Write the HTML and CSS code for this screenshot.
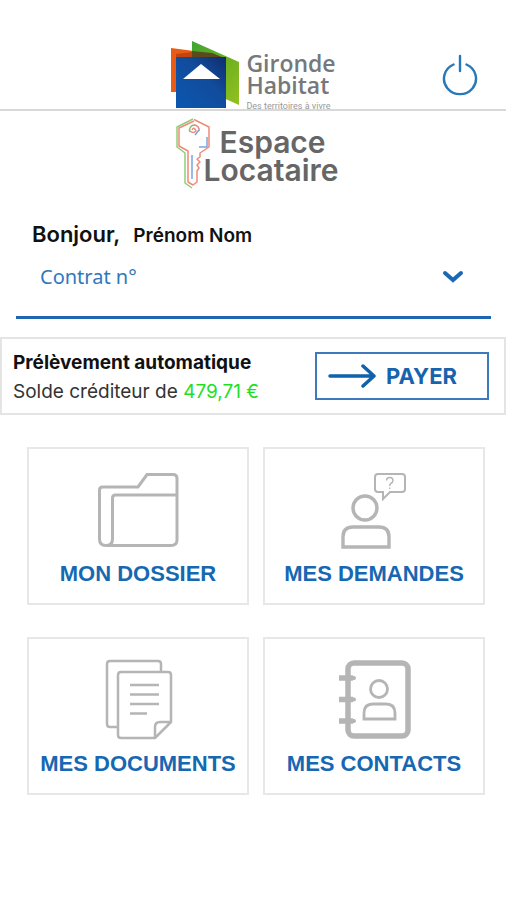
FILE: index.html
```html
<!DOCTYPE html>
<html lang="fr">
<head>
<meta charset="utf-8">
<meta name="viewport" content="width=device-width, initial-scale=1">
<title>Gironde Habitat – Espace Locataire</title>
<link rel="stylesheet" href="styles.css">
</head>
<body>
<header class="header">
  <a class="brand" href="#">
    <svg class="brand-mark" viewBox="0 0 70 68" aria-hidden="true">
      <defs>
        <linearGradient id="blue" x1="0" y1="1" x2="1" y2="0">
          <stop offset="0" stop-color="#0a58b0"/><stop offset=".6" stop-color="#124b9c"/><stop offset="1" stop-color="#102c6c"/>
        </linearGradient>
        <linearGradient id="green" x1="0" y1="0" x2="1" y2="1">
          <stop offset="0" stop-color="#3fa535"/><stop offset=".55" stop-color="#6fb11f"/><stop offset="1" stop-color="#95c11f"/>
        </linearGradient>
      </defs>
      <path fill="#ea5b13" d="M1 8 24 11V52H1z"/>
      <path fill="url(#green)" d="M22 1 69 22V65L22 44z"/>
      <path fill="#5a4a1c" d="M22 11 42 13 52 17H22z"/>
      <path fill="#c2450f" d="M6 14 22 12V17H6z"/>
      <path fill="url(#blue)" d="M6 17H56V68H6z"/>
      <path fill="#fff" d="M13 39 31 24 50 39z"/>
    </svg>
    <span class="brand-text">
      <span class="brand-name">Gironde</span>
      <span class="brand-name">Habitat</span>
      <span class="brand-tag">Des territoires à vivre</span>
    </span>
  </a>
  <button class="power" type="button" aria-label="Se déconnecter">
    <svg viewBox="0 0 36 42" aria-hidden="true">
      <path d="M11.500 10.500A16 15.500 0 1 0 24.500 10.500M18 2V17" fill="none" stroke="#2878b8" stroke-width="2.400" stroke-linecap="round"/>
    </svg>
  </button>
</header>

<main>
  <h1 class="space">
    <svg class="space-key" viewBox="0 0 36 72" aria-hidden="true">
      <g fill="none" stroke-width="1.500" stroke-linejoin="round">
        <path stroke="#8ccf7c" d="M18 2 2 10V30L10 36V66L17 71"/>
        <path stroke="#f08a78" d="M19 2.500 34 10V30L25 36V40L22 42 25 45 22 48 24 51 22 54V65L18 68 13 65V34L4 29V11L19 4"/>
        <path stroke="#7aa6dc" d="M32 20V30H24M17 38V62"/>
        <path stroke="#7ac27a" d="M15 15A5 5 0 0 1 20 8"/>
        <path stroke="#f08a78" d="M19 8A5 5 0 0 1 24 14M15 14Q18 17 21 14Q19 9 17 13"/>
        <path stroke="#7aa6dc" d="M24 13 20 18"/>
      </g>
    </svg>
    <span class="space-text"><span class="space-first">Espace</span><span>Locataire</span></span>
  </h1>

  <p class="hello"><strong class="hello-word">Bonjour,</strong><strong>Prénom Nom</strong></p>

  <div class="contract">
    <select class="contract-select" aria-label="Contrat">
      <option>Contrat n°</option>
    </select>
    <svg class="contract-arrow" viewBox="0 0 22 16" aria-hidden="true">
      <path d="M3 5 11 12 19 5" fill="none" stroke="#1b68b3" stroke-width="4" stroke-linecap="round"/>
    </svg>
  </div>

  <section class="balance">
    <div class="balance-text">
      <strong>Prélèvement automatique</strong>
      <span class="balance-line">Solde créditeur de <span class="amount">479,71 €</span></span>
    </div>
    <button class="pay" type="button">
      <svg class="pay-arrow" viewBox="0 0 48 26" aria-hidden="true">
        <path d="M2 13H46M35 3 46 13 35 23" fill="none" stroke="#0f62ac" stroke-width="3.500" stroke-linecap="round" stroke-linejoin="round"/>
      </svg>
      PAYER
    </button>
  </section>

  <nav class="cards" aria-label="Menu principal">
    <a class="card" href="#">
      <svg class="card-icon" viewBox="1 0 121 84" aria-hidden="true">
        <path d="M29 77.500Q22.500 77.500 22.500 71V22Q22.500 19 25.500 19H61L70 6.500H96Q100 6.500 100 10.500V72Q100 77.500 94 77.500H29Q35.500 77.500 35.500 71V30Q35.500 27 38.500 27H100"/>
      </svg>
      <span>MON DOSSIER</span>
    </a>
    <a class="card" href="#">
      <svg class="card-icon" viewBox="1 0 121 84" aria-hidden="true">
        <g stroke-width="3.400"><circle cx="52" cy="40" r="12"/><path d="M30 79V69Q30 59 40 59H66Q76 59 76 69V79z"/></g>
        <path stroke-width="2" d="M65 6H89Q92 6 92 9V21Q92 24 89 24H77L70 31V24H65Q62 24 62 21V9Q62 6 65 6z"/>
        <path stroke-width="1.400" d="M73.500 12.500Q73.500 9.500 76.700 9.500T80 12.500Q80 14.500 77.700 15.500Q76.700 16.500 76.700 18M76.700 19.500V21"/>
      </svg>
      <span>MES DEMANDES</span>
    </a>
    <a class="card" href="#">
      <svg class="card-icon" viewBox="0 1 121 84" aria-hidden="true">
        <g stroke-width="2.500" stroke-linejoin="round">
          <path d="M39 70H32Q29 70 29 67V7Q29 4 32 4H80Q83 4 83 7V14"/>
          <path d="M77 81H43Q40 81 40 78V18Q40 15 43 15H90Q93 15 93 18V65L77 81V70Q77 65 82 65H93"/>
          <path d="M52 28H81M52 37.500H81M52 47H81M52 56.500H69"/>
        </g>
      </svg>
      <span>MES DOCUMENTS</span>
    </a>
    <a class="card" href="#">
      <svg class="card-icon" viewBox="0 1 121 84" aria-hidden="true">
        <rect x="34" y="6" width="60" height="73" rx="6" stroke-width="5.500"/>
        <path stroke-width="5.500" d="M25 21H39M25 42.500H39M25 64H39"/>
        <path stroke-width="4" stroke-linecap="round" d="M38 21H40M38 42.500H40M38 64H40"/>
        <g stroke-width="2.800"><circle cx="65" cy="32" r="8.500"/><path d="M50 62V56Q50 47 59 47H72Q81 47 81 56V62z"/></g>
      </svg>
      <span>MES CONTACTS</span>
    </a>
  </nav>
</main>
</body>
</html>
```
FILE: styles.css
```css
* { box-sizing: border-box; }

body {
  margin: 0;
  background: #fff;
  color: #111;
  font-family: Inter, "Liberation Sans", sans-serif;
}

svg { display: block; }

.header {
  display: grid;
  grid-template-columns: 1fr auto 1fr;
  align-items: start;
  padding: 40px 28px 0;
  height: 111px;
  border-bottom: 2px solid #d8d8d8;
}

.brand {
  grid-column: 2;
  display: flex;
  gap: 6px;
  color: #75797b;
  text-decoration: none;
}

.brand-mark { width: 70px; height: 68px; }

.brand-text {
  display: flex;
  flex-direction: column;
  padding-top: 12px;
  font-family: "Open Sans", "Noto Sans", sans-serif;
}

.brand-name {
  font-size: 23px;
  line-height: 22px;
  font-weight: 600;
}

.brand-tag {
  font: 9px/20px Roboto, "Liberation Sans", sans-serif;
  color: #999;
}

.power {
  justify-self: end;
  margin-top: 14px;
  padding: 0;
  border: 0;
  background: none;
}

.power svg { width: 36px; height: 42px; }

.space {
  display: flex;
  justify-content: center;
  margin: 0;
  padding: 6px 0 0 8px;
  font-size: 30px;
  line-height: 28px;
  font-weight: 600;
  color: #666;
}

.space-key { width: 36px; height: 72px; }

.space-text {
  display: flex;
  flex-direction: column;
  margin-left: -8px;
  padding-top: 11px;
}

.space-first { padding-left: 16px; }

.hello {
  display: flex;
  align-items: baseline;
  gap: 13px;
  margin: 0;
  padding: 30px 32px 0;
  font-size: 19px;
  line-height: 30px;
}

.hello strong { font-weight: 600; }
.hello .hello-word { font-size: 22px; }

.contract {
  display: grid;
  align-items: center;
  margin: 0 15px 0 16px;
  padding-bottom: 15px;
  border-bottom: 3px solid #1f65b0;
}

.contract-select,
.contract-arrow { grid-area: 1 / 1; }

.contract-select {
  appearance: none;
  width: 100%;
  height: 50px;
  padding: 0 24px;
  border: 0;
  background: none;
  color: #2f78bd;
  font: 20px "Noto Sans", "Open Sans", sans-serif;
}

.contract-arrow {
  justify-self: end;
  width: 22px;
  height: 16px;
  margin-right: 27px;
  pointer-events: none;
}

.balance {
  display: flex;
  justify-content: space-between;
  align-items: center;
  margin-top: 18px;
  padding: 7px 15px 7px 11px;
  border: 2px solid #e4e4e4;
}

.balance-text {
  display: flex;
  flex-direction: column;
  padding-top: 2px;
  font-size: 19px;
  line-height: 29px;
}

.balance-text strong { font-weight: 700; }
.balance-line { color: #333; }
.amount { color: #1fe01f; }

.pay {
  display: flex;
  align-items: center;
  gap: 10px;
  width: 174px;
  height: 48px;
  padding: 0 11px;
  border: 2px solid #3e78bd;
  background: #fff;
  color: #1763ad;
  font: 700 22px Inter, "Liberation Sans", sans-serif;
}

.pay-arrow { width: 48px; height: 26px; }

.cards {
  display: grid;
  grid-template-columns: 1fr 1fr;
  gap: 32px 14px;
  padding: 32px 21px 32px 27px;
}

.card {
  display: flex;
  flex-direction: column;
  align-items: center;
  gap: 8px;
  padding: 19px 0 15px;
  border: 2px solid #e6e8e8;
  color: #1668b3;
  font: 700 22px/28px "Liberation Sans", Arial, sans-serif;
  text-decoration: none;
  white-space: nowrap;
}

.card-icon {
  width: 121px;
  height: 84px;
  fill: none;
  stroke: #b5b5b5;
  stroke-width: 3;
}
```
